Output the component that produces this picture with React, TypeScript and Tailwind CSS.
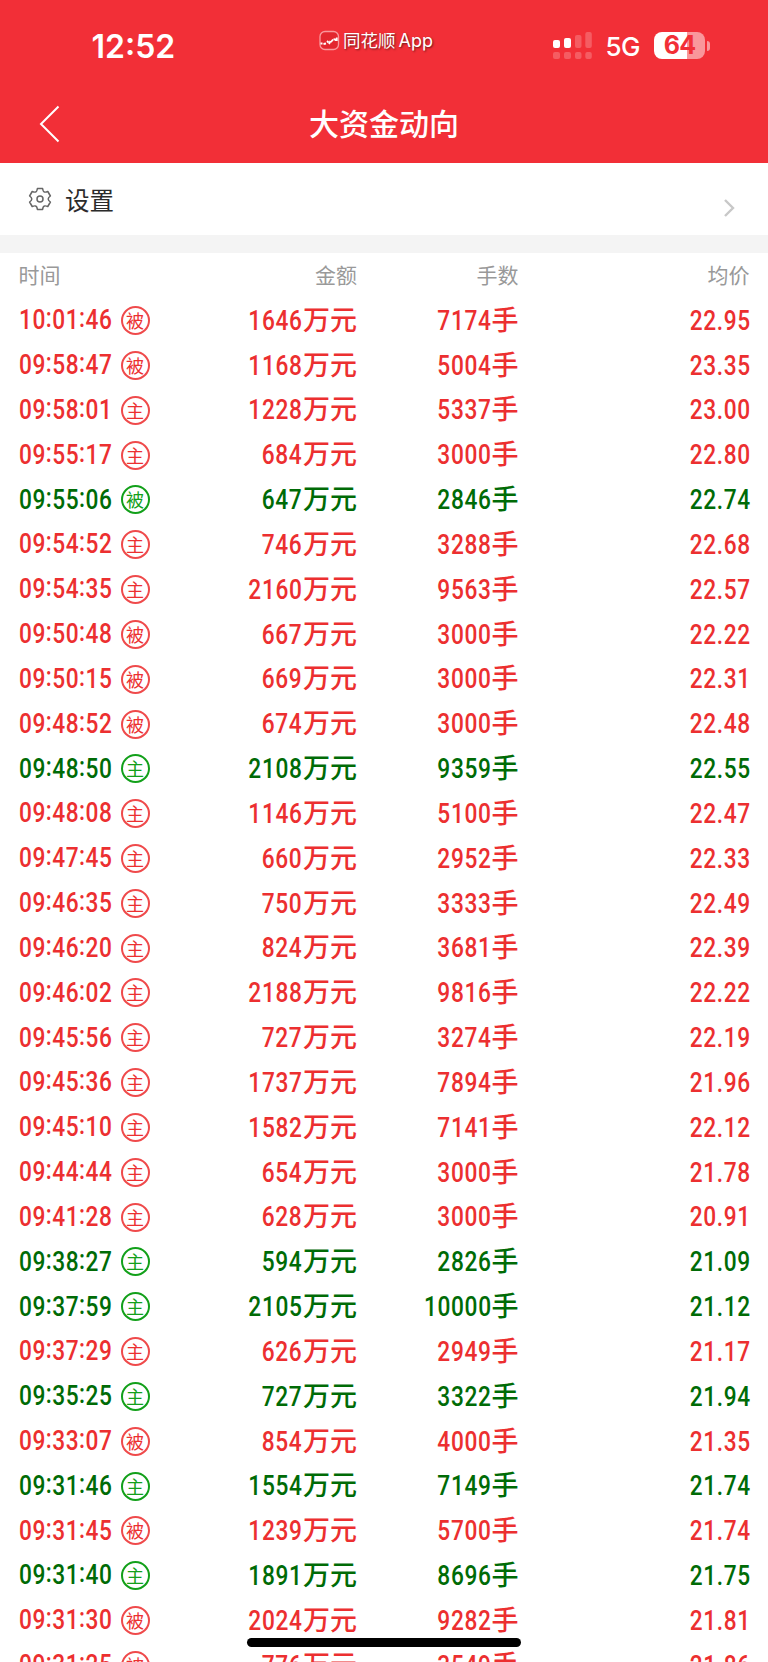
import React from "react";

type Side = "主" | "被";
type Tone = "up" | "down";
type Trade = [time: string, side: Side, amount: string, lots: string, price: string, tone?: Tone];

const trades: Trade[] = [
  ["10:01:46", "被", "1646", "7174", "22.95"],
  ["09:58:47", "被", "1168", "5004", "23.35"],
  ["09:58:01", "主", "1228", "5337", "23.00"],
  ["09:55:17", "主", "684", "3000", "22.80"],
  ["09:55:06", "被", "647", "2846", "22.74", "down"],
  ["09:54:52", "主", "746", "3288", "22.68"],
  ["09:54:35", "主", "2160", "9563", "22.57"],
  ["09:50:48", "被", "667", "3000", "22.22"],
  ["09:50:15", "被", "669", "3000", "22.31"],
  ["09:48:52", "被", "674", "3000", "22.48"],
  ["09:48:50", "主", "2108", "9359", "22.55", "down"],
  ["09:48:08", "主", "1146", "5100", "22.47"],
  ["09:47:45", "主", "660", "2952", "22.33"],
  ["09:46:35", "主", "750", "3333", "22.49"],
  ["09:46:20", "主", "824", "3681", "22.39"],
  ["09:46:02", "主", "2188", "9816", "22.22"],
  ["09:45:56", "主", "727", "3274", "22.19"],
  ["09:45:36", "主", "1737", "7894", "21.96"],
  ["09:45:10", "主", "1582", "7141", "22.12"],
  ["09:44:44", "主", "654", "3000", "21.78"],
  ["09:41:28", "主", "628", "3000", "20.91"],
  ["09:38:27", "主", "594", "2826", "21.09", "down"],
  ["09:37:59", "主", "2105", "10000", "21.12", "down"],
  ["09:37:29", "主", "626", "2949", "21.17"],
  ["09:35:25", "主", "727", "3322", "21.94", "down"],
  ["09:33:07", "被", "854", "4000", "21.35"],
  ["09:31:46", "主", "1554", "7149", "21.74", "down"],
  ["09:31:45", "被", "1239", "5700", "21.74"],
  ["09:31:40", "主", "1891", "8696", "21.75", "down"],
  ["09:31:30", "被", "2024", "9282", "21.81"],
  ["09:31:25", "被", "776", "3549", "21.86"],
];

const StatusBar = () => (
  <div className="flex h-[86px] items-start">
    <div className="w-[318px] pt-[27px] pl-[91.5px] font-[Inter] text-[32px] leading-[40px] font-semibold">
      12:52
    </div>
    <div className="flex w-[235px] items-center pt-[26px]">
      <svg width="22" height="22" viewBox="0 0 22 22" fill="none">
        <rect x="2" y="1.5" width="18.5" height="18" rx="5" fill="#e3262e" stroke="#f9989c" strokeWidth="1.3" />
        <path d="M2.500 13.500h2M5.500 14l2.500-.5M9 11l1.500 1.500M11 14l1.500-3M13 12l2-2.500M15.500 9.500l1.500-.5M17.500 8.500v2.500M18.800 7.500v3.500" stroke="white" strokeWidth="1.8" />
      </svg>
      <span className="ml-[3px] text-[17.5px] leading-[28px] [text-shadow:1px_1px_2px_rgba(0,0,0,0.55)]">
        同花顺<span className="ml-[3px] font-[Inter] text-[18px]">App</span>
      </span>
    </div>
    <svg width="41" height="28" viewBox="0 0 41 28" fill="white" className="mt-8">
      <rect x="0" y="8" width="7" height="8" rx="2" />
      <rect x="11" y="6" width="7" height="10" rx="2" />
      <g fillOpacity="0.22">
        <rect x="22" y="3" width="6.5" height="13" rx="2" />
        <rect x="32.3" y="0" width="6.5" height="16" rx="2" />
        <rect x="0" y="20" width="7" height="7" rx="2" />
        <rect x="11" y="20" width="7" height="7" rx="2" />
        <rect x="22" y="20" width="6.5" height="7" rx="2" />
        <rect x="32.3" y="20" width="6.5" height="7" rx="2" />
      </g>
    </svg>
    <div className="ml-[11.5px] w-[48px] pt-[27px] font-[Inter] text-[26px] leading-[40px] font-medium tracking-[-0.5px]">
      5G
    </div>
    <div className="mt-8 ml-[0.5px] flex items-center">
      <div className="flex h-[27px] w-[51px] items-center justify-center rounded-[8px] bg-[linear-gradient(90deg,#fff_64%,#f9979b_64%)] font-[Inter] text-[25px] leading-none font-bold tracking-[-0.8px] text-[#f22f37]">
        64
      </div>
      <div className="ml-[2px] h-[10px] w-[3px] rounded-r-full bg-[#f9979b]" />
    </div>
  </div>
);

const Digits = ({ children }: { children: string }) => (
  <span className="mr-[-0.8px] inline-block origin-right scale-x-[0.84] font-[Roboto] font-medium tracking-[0.8px]">
    {children}
  </span>
);

// colons sit at mid height of the digits
const Time = ({ value }: { value: string }) => (
  <span className="flex origin-left scale-x-[0.84] font-[Roboto] font-medium tracking-[0.6px]">
    {value.split("").map((char, i) => (
      <span key={i} className={char === ":" ? "mt-[-2px]" : ""}>
        {char}
      </span>
    ))}
  </span>
);

const TradeRow = ({ trade }: { trade: Trade }) => {
  const [time, side, amount, lots, price, tone = "up"] = trade;
  const down = tone === "down";
  return (
    <div
      className={`grid h-[44.84px] shrink-0 grid-cols-[338.5px_161.5px_232px] items-center pl-[18.5px] text-[27px] leading-[44px] font-medium ${
        down ? "text-[#006b06]" : "text-[#ec2f30]"
      }`}
    >
      <div className="flex items-center justify-between">
        <div className="flex items-center">
          <div className="w-[102px] pt-[1px]">
            <Time value={time} />
          </div>
          <span
            className={`mt-[1.5px] flex size-[29px] items-center justify-center rounded-full border-2 pb-[1px] text-[18px] leading-none font-normal ${
              down ? "border-[#12a01a] text-[#12a01a]" : "border-[#ef4a4b]"
            }`}
          >
            {side}
          </span>
        </div>
        <div>
          <Digits>{amount}</Digits>
          <span className="ml-[1px]">万元</span>
        </div>
      </div>
      <div className="text-right">
        <Digits>{lots}</Digits>
        <span className="ml-[1px]">手</span>
      </div>
      <div className="text-right">
        <Digits>{price}</Digits>
      </div>
    </div>
  );
};

const App = () => {
  return (
    <div className="relative flex h-[1662px] w-[768px] flex-col overflow-hidden bg-white font-['Noto_Sans_CJK_SC',sans-serif]">
      <header className="h-[163px] shrink-0 bg-[#f22f37] text-white">
        <StatusBar />
        <div className="flex h-[75px] items-center">
          <div className="w-[120px] pl-[38px]">
            <svg width="24" height="40" viewBox="0 0 24 40" fill="none" stroke="white" strokeWidth="2">
              <path d="M20.500 2.500L3 20l17.500 17.500" />
            </svg>
          </div>
          <h1 className="mt-[-3px] flex-1 text-center text-[30px] leading-[40px] font-medium">大资金动向</h1>
          <div className="w-[120px]" />
        </div>
      </header>

      <div className="flex h-[72px] shrink-0 items-center pr-[33px] pl-[28px]">
        <svg
          width="24"
          height="24"
          viewBox="0 0 24 24"
          fill="none"
          stroke="#666"
          strokeWidth="1.5"
          strokeLinejoin="round"
        >
          <path d="M9.400 1.500H14.600Q15 4.600 16.400 5Q17.500 5.400 19.800 4.500L22.400 9Q20.200 10.500 20.200 12Q20.200 13.500 22.400 15L19.800 19.500Q17.500 18.600 16.400 19Q15 19.400 14.600 22.500H9.400Q9 19.400 7.600 19Q6.500 18.600 4.200 19.500L1.600 15Q3.800 13.500 3.800 12Q3.800 10.500 1.600 9L4.200 4.500Q6.500 5.400 7.600 5Q9 4.600 9.400 1.500Z" />
          <circle cx="12" cy="12" r="3" />
        </svg>
        <span className="mt-[2px] ml-[13px] flex-1 text-[24.5px] leading-[36px] text-[#2b2b2b]">设置</span>
        <svg width="12" height="20" viewBox="0 0 12 20" fill="none" stroke="#c8c8c8" strokeWidth="2.4" className="mt-[18px]">
          <path d="M2 2l8 8-8 8" />
        </svg>
      </div>
      <div className="h-[18px] shrink-0 bg-[#f4f4f4]" />

      <div className="grid h-[43.8px] shrink-0 grid-cols-[338.5px_161.5px_231px] items-start pl-[18.5px] text-[21px] leading-[42px] text-[#999]">
        <div className="flex justify-between">
          <span>时间</span>
          <span>金额</span>
        </div>
        <div className="text-right">手数</div>
        <div className="text-right">均价</div>
      </div>
      {trades.map((trade) => (
        <TradeRow key={trade[0]} trade={trade} />
      ))}

      {/* home indicator */}
      <div className="absolute bottom-[15px] left-[247px] h-[9px] w-[274px] rounded-full bg-black" />
    </div>
  );
};

export default App;
